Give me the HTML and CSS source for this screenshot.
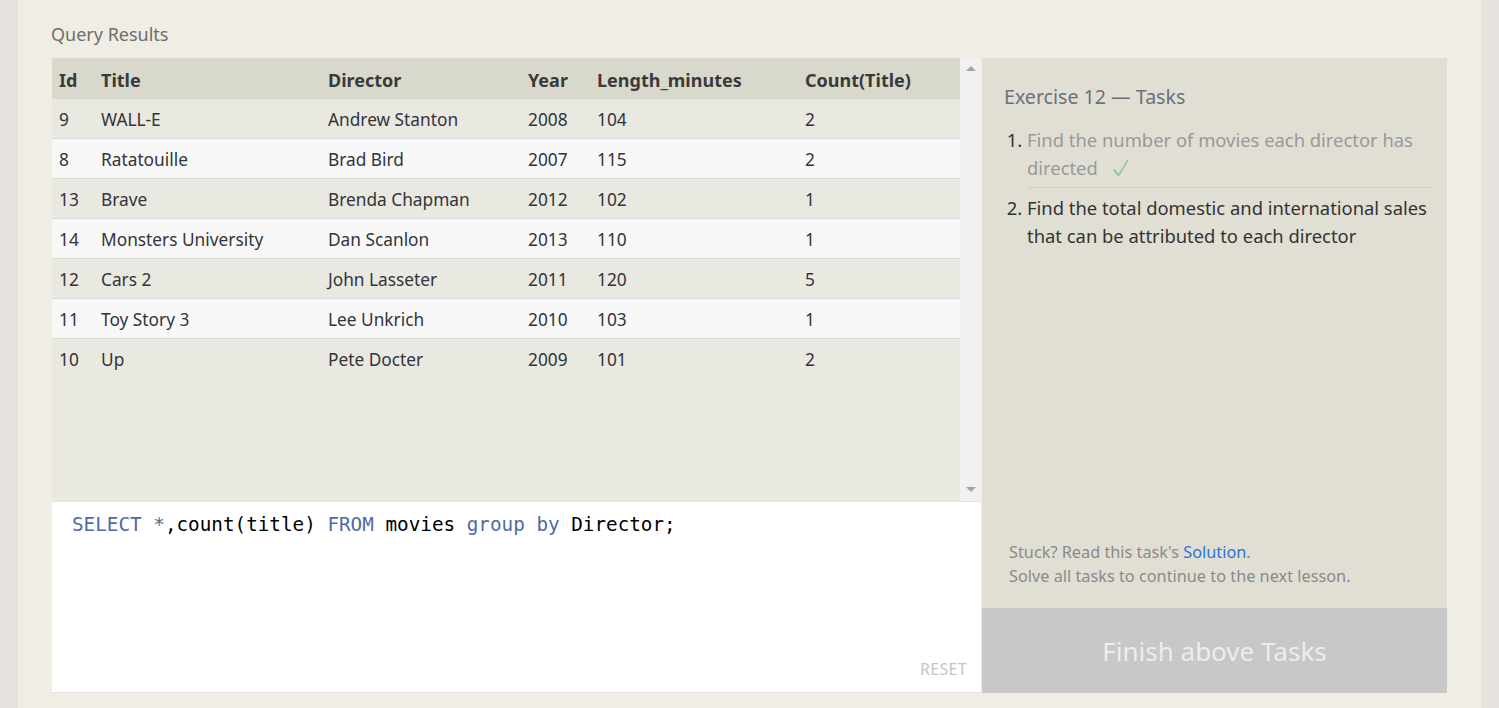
FILE: index.html
```html
<!DOCTYPE html>
<html>
<head>
<meta charset="utf-8">
<link rel="stylesheet" href="styles.css">
</head>
<body>
<div class="page">
  <section class="card">
    <h2 class="section-title">Query Results</h2>
    <div class="workspace">
      <div class="left">
        <div class="results">
          <div class="table-wrap">
            <table class="grid">
              <colgroup>
                <col class="c-id"><col class="c-title"><col class="c-dir"><col class="c-year"><col class="c-len"><col class="c-count">
              </colgroup>
              <thead>
                <tr><th>Id</th><th>Title</th><th>Director</th><th>Year</th><th>Length_minutes</th><th>Count(Title)</th></tr>
              </thead>
              <tbody>
                <tr><td>9</td><td>WALL-E</td><td>Andrew Stanton</td><td>2008</td><td>104</td><td>2</td></tr>
                <tr><td>8</td><td>Ratatouille</td><td>Brad Bird</td><td>2007</td><td>115</td><td>2</td></tr>
                <tr><td>13</td><td>Brave</td><td>Brenda Chapman</td><td>2012</td><td>102</td><td>1</td></tr>
                <tr><td>14</td><td>Monsters University</td><td>Dan Scanlon</td><td>2013</td><td>110</td><td>1</td></tr>
                <tr><td>12</td><td>Cars 2</td><td>John Lasseter</td><td>2011</td><td>120</td><td>5</td></tr>
                <tr><td>11</td><td>Toy Story 3</td><td>Lee Unkrich</td><td>2010</td><td>103</td><td>1</td></tr>
                <tr><td>10</td><td>Up</td><td>Pete Docter</td><td>2009</td><td>101</td><td>2</td></tr>
              </tbody>
            </table>
          </div>
          <div class="scrollbar">
            <span class="arrow up"></span>
            <span class="arrow down"></span>
          </div>
        </div>
        <div class="editor">
          <pre class="code"><span class="kw">SELECT</span> <span class="op">*</span>,count(title) <span class="kw">FROM</span> movies <span class="kw">group</span> <span class="kw">by</span> Director;</pre>
          <div class="editor-foot"><span class="reset">RESET</span></div>
        </div>
      </div>
      <aside class="tasks">
        <div class="tasks-body">
          <h3 class="tasks-title">Exercise 12 — Tasks</h3>
          <ol class="task-list">
            <li class="task done">Find the number of movies each director has directed<svg class="check" width="16" height="18" viewBox="0 0 16 18"><path d="M1 10.5 L5.5 16.5 L15 1" fill="none" stroke="#7cc389" stroke-width="1.4" stroke-linejoin="round"/></svg></li>
            <li class="task">Find the total domestic and international sales that can be attributed to each director</li>
          </ol>
          <div class="hint">
            <p>Stuck? Read this task's <a class="link">Solution</a>.</p>
            <p>Solve all tasks to continue to the next lesson.</p>
          </div>
        </div>
        <div class="finish">Finish above Tasks</div>
      </aside>
    </div>
  </section>
</div>
</body>
</html>
```
FILE: styles.css
```css
html, body {
  margin: 0;
  padding: 0;
}
body {
  background: #e6e3df;
  font-family: "Noto Sans", "Open Sans", sans-serif;
  color: #333;
  height: 708px;
  overflow: hidden;
}
.page {
  padding: 0 18px;
}
.card {
  background: #f0ede5;
  padding: 21px 33px 16px 34px;
  height: 708px;
  box-sizing: border-box;
}
.section-title {
  margin: 0 0 11px -1px;
  font-size: 18px;
  font-weight: 400;
  color: #6e6e6e;
  line-height: 26px;
}
.workspace {
  display: flex;
  height: 635px;
}
.left {
  width: 929px;
  display: flex;
  flex-direction: column;
}
.results {
  display: flex;
  height: 443px;
  background: #e9e8e1;
}
.table-wrap {
  flex: 1;
}
.grid {
  width: 908px;
  border-collapse: collapse;
  table-layout: fixed;
  font-size: 17.3px;
}
.c-id { width: 42px; }
.c-title { width: 227px; }
.c-dir { width: 200px; }
.c-year { width: 69px; }
.c-len { width: 208px; }
.c-count { width: 162px; }
.grid th {
  background: #d9d8cc;
  text-align: left;
  font-weight: 700;
  height: 38px;
  padding: 3px 7px 0;
  color: #3a3a3a;
  font-size: 18px;
  line-height: 24px;
}
.grid td {
  height: 37px;
  padding: 2px 7px 0;
  border-bottom: 1px solid #dedcd6;
  color: #33343a;
  white-space: nowrap;
  line-height: 24px;
}
.grid tbody tr:nth-child(even) td {
  background: #f8f8f8;
}
.grid tbody tr:last-child td {
  border-bottom: none;
}
.scrollbar {
  width: 21px;
  background: #f1f1f1;
  display: flex;
  flex-direction: column;
  justify-content: space-between;
  align-items: center;
  padding: 8px 0 9px;
  box-sizing: border-box;
}
.arrow {
  width: 0;
  height: 0;
  border-left: 5px solid transparent;
  border-right: 5px solid transparent;
}
.arrow.up { border-bottom: 5px solid #a3a3a3; }
.arrow.down { border-top: 5px solid #a3a3a3; }
.editor {
  flex: 1;
  background: #fff;
  border-top: 1px solid #e4e2dc;
  border-bottom: 1px solid #e4e2dc;
  display: flex;
  flex-direction: column;
}
.code {
  margin: 0;
  padding: 11px 20px 0 20px;
  font-family: "DejaVu Sans Mono", "Liberation Mono", monospace;
  font-size: 19.3px;
  line-height: 24px;
  color: #000;
  flex: 1;
}
.kw, .op { color: #4f6aa5; }
.editor-foot {
  display: flex;
  justify-content: flex-end;
  padding: 0 14px 12px;
}
.reset {
  font-size: 16px;
  color: #c4c4c4;
  letter-spacing: 0.3px;
}
.tasks {
  width: 465px;
  margin-left: 1px;
  display: flex;
  flex-direction: column;
}
.tasks-body {
  flex: 1;
  background: #e1dfd4;
  padding: 25px 16px 16px 22px;
  display: flex;
  flex-direction: column;
}
.tasks-title {
  margin: 0 0 15px 0;
  font-size: 19.6px;
  font-weight: 400;
  color: #6b7080;
  line-height: 28px;
}
.task-list {
  margin: 0;
  padding-left: 23px;
  font-size: 18.4px;
  line-height: 28px;
}
.task {
  color: #333;
  padding-bottom: 5px;
  margin-bottom: 6px;
}
.task.done {
  color: #999;
  border-bottom: 1px solid #d2d0c6;
}
.task::marker {
  color: #333;
}
.check {
  margin-left: 15px;
  vertical-align: -2px;
}
.hint {
  margin-top: auto;
  font-size: 16.3px;
  color: #8a8a8a;
  line-height: 24px;
  padding-left: 5px;
  margin-bottom: 4px;
}
.hint p { margin: 0; }
.link {
  color: #2b72d9;
}
.finish {
  height: 85px;
  background: #c8c8c8;
  color: #ededed;
  font-size: 26px;
  display: flex;
  align-items: center;
  justify-content: center;
}
```
